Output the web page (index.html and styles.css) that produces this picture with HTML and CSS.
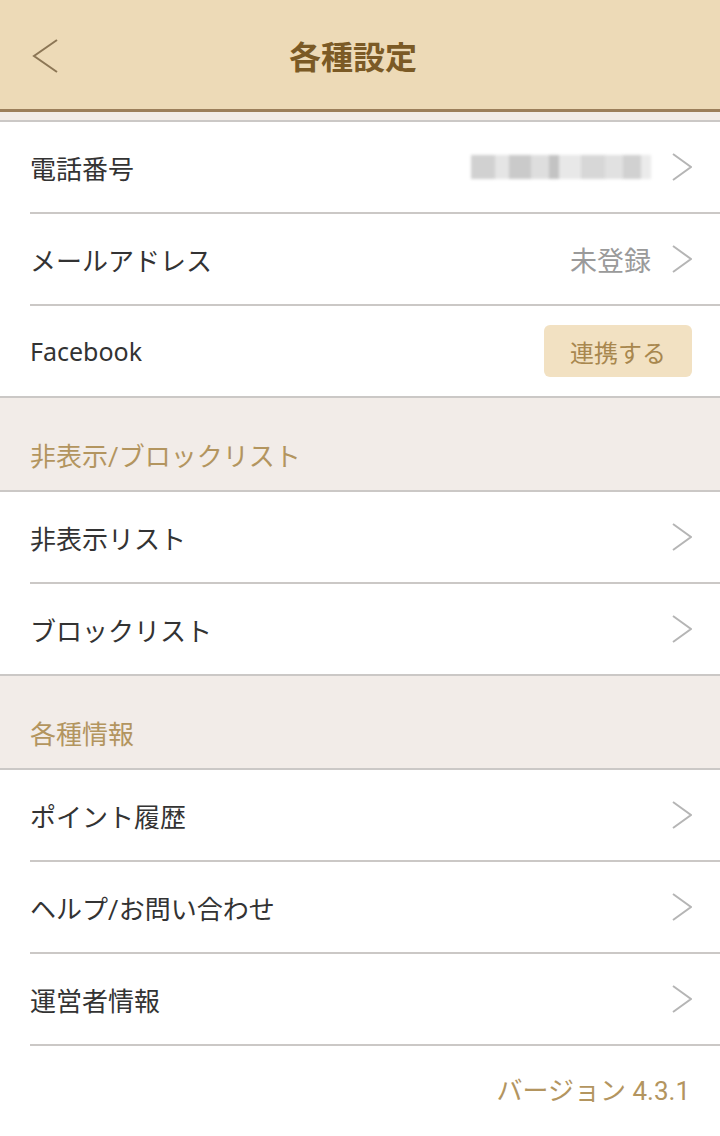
FILE: index.html
```html
<!DOCTYPE html>
<html lang="ja">
<head>
    <meta charset="UTF-8">
    <meta name="viewport" content="width=device-width, initial-scale=1.0">
    <title>各種設定</title>
    <link rel="stylesheet" href="styles.css">
</head>
<body>
    <header class="top-bar">
        <span class="back">
            <svg width="28" height="34" viewBox="0 0 28 34"><polyline points="25,1 2,17 25,33" fill="none" stroke="#8c7655" stroke-width="2"/></svg>
        </span>
        <h1>各種設定</h1>
    </header>
    <div class="gap"></div>

    <ul class="list">
        <li class="row">
            <span class="label">電話番号</span>
            <span class="value">
                <span class="masked">
                    <i style="width:24px;opacity:.7"></i><i style="width:14px;opacity:.4"></i><i style="width:22px;opacity:.8"></i><i style="width:18px;opacity:.5"></i><i style="width:10px;opacity:.9"></i><i style="width:22px;opacity:.35"></i><i style="width:24px;opacity:.6"></i><i style="width:18px;opacity:.45"></i><i style="width:18px;opacity:.7"></i><i style="width:10px;opacity:.3"></i>
                </span>
                <svg class="chev" width="20" height="28" viewBox="0 0 20 28"><polyline points="1,1 19,14 1,27" fill="none" stroke="#b5b5b5" stroke-width="2"/></svg>
            </span>
        </li>
        <li class="row">
            <span class="label">メールアドレス</span>
            <span class="value"><span class="muted">未登録</span><svg class="chev" width="20" height="28" viewBox="0 0 20 28"><polyline points="1,1 19,14 1,27" fill="none" stroke="#b5b5b5" stroke-width="2"/></svg></span>
        </li>
        <li class="row last">
            <span class="label latin">Facebook</span>
            <button class="link-btn">連携する</button>
        </li>
    </ul>

    <div class="section">非表示/ブロックリスト</div>
    <ul class="list">
        <li class="row"><span class="label">非表示リスト</span><svg class="chev" width="20" height="28" viewBox="0 0 20 28"><polyline points="1,1 19,14 1,27" fill="none" stroke="#b5b5b5" stroke-width="2"/></svg></li>
        <li class="row last"><span class="label">ブロックリスト</span><svg class="chev" width="20" height="28" viewBox="0 0 20 28"><polyline points="1,1 19,14 1,27" fill="none" stroke="#b5b5b5" stroke-width="2"/></svg></li>
    </ul>

    <div class="section">各種情報</div>
    <ul class="list">
        <li class="row"><span class="label">ポイント履歴</span><svg class="chev" width="20" height="28" viewBox="0 0 20 28"><polyline points="1,1 19,14 1,27" fill="none" stroke="#b5b5b5" stroke-width="2"/></svg></li>
        <li class="row"><span class="label">ヘルプ/お問い合わせ</span><svg class="chev" width="20" height="28" viewBox="0 0 20 28"><polyline points="1,1 19,14 1,27" fill="none" stroke="#b5b5b5" stroke-width="2"/></svg></li>
        <li class="row"><span class="label">運営者情報</span><svg class="chev" width="20" height="28" viewBox="0 0 20 28"><polyline points="1,1 19,14 1,27" fill="none" stroke="#b5b5b5" stroke-width="2"/></svg></li>
    </ul>

    <div class="version">バージョン 4.3.1</div>
</body>
</html>
```

FILE: styles.css
```css
body { margin: 0; background: #fff; font-family: Roboto, "Noto Sans CJK JP", sans-serif; color: #333; }
ul { list-style: none; margin: 0; padding: 0; }

.top-bar {
    height: 109px;
    background: #eddab7;
    border-bottom: 3px solid #9c7f5b;
    display: flex;
    align-items: center;
    justify-content: center;
    padding-right: 14px;
    position: relative;
}
.top-bar h1 { margin: 0; font-size: 32px; font-weight: bold; color: #7b5a26; }
.back { position: absolute; left: 32px; top: 39px; }
.back svg { display: block; }

.gap { height: 8px; background: #f2ece8; border-bottom: 2px solid #cbc8c6; }

.list { background: #fff; padding-left: 30px; }
.row {
    height: 90px;
    display: flex;
    align-items: center;
    justify-content: space-between;
    padding-right: 28px;
    border-bottom: 2px solid #cbc8c6;
}
.list .row.last { border-bottom: none; }
.label { font-size: 26px; color: #333; }
.label.latin { font-family: "Noto Sans", "Noto Sans CJK JP", sans-serif; font-size: 25px; }
.value { display: flex; align-items: center; gap: 21px; }
.muted { font-size: 27px; color: #9a9a9a; }
.chev { display: block; }

.masked { display: flex; height: 24px; filter: blur(1.5px); }
.masked i { display: block; height: 24px; background: #bdbdbd; }

.link-btn {
    width: 148px;
    height: 52px;
    border: none;
    border-radius: 6px;
    background: #f2e1c2;
    color: #a8874e;
    font-family: Roboto, "Noto Sans CJK JP", sans-serif;
    font-size: 24px;
}

.section {
    box-sizing: border-box;
    height: 96px;
    border-top: 2px solid #cbc8c6;
    border-bottom: 2px solid #cbc8c6;
    background: #f2ece8;
    color: #b3955f;
    font-size: 26px;
    padding: 0 0 17px 30px;
    display: flex;
    align-items: flex-end;
}

.version { text-align: right; padding: 24px 30px 0 0; font-size: 26px; color: #b3955f; }
```
